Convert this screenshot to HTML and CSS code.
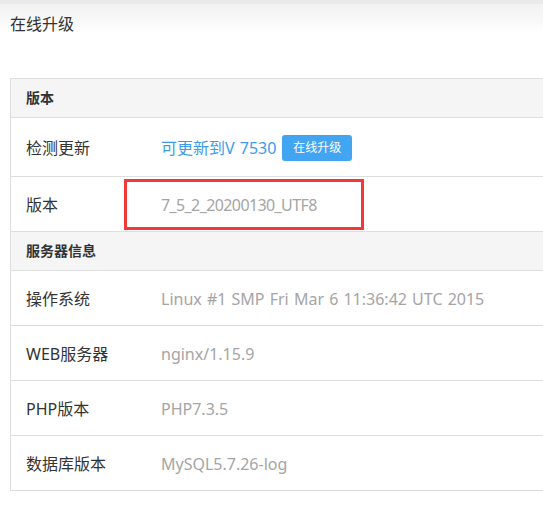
FILE: index.html
```html
<!DOCTYPE html>
<html lang="zh-CN">
<head>
<meta charset="utf-8">
<link rel="stylesheet" href="styles.css">
</head>
<body>
<div class="topbar"></div>
<div class="page-title">在线升级</div>
<div class="panel">
  <div class="row head"><div class="label">版本</div></div>
  <div class="row tall">
    <div class="label">检测更新</div>
    <div class="value"><span class="link">可更新到V 7530</span><span class="btn">在线升级</span></div>
  </div>
  <div class="row marked">
    <div class="label">版本</div>
    <div class="value version">7_5_2_20200130_UTF8</div>
    <div class="highlight"></div>
  </div>
  <div class="row head"><div class="label">服务器信息</div></div>
  <div class="row"><div class="label">操作系统</div><div class="value">Linux #1 SMP Fri Mar 6 11:36:42 UTC 2015</div></div>
  <div class="row"><div class="label">WEB服务器</div><div class="value">nginx/1.15.9</div></div>
  <div class="row"><div class="label">PHP版本</div><div class="value">PHP7.3.5</div></div>
  <div class="row"><div class="label">数据库版本</div><div class="value">MySQL5.7.26-log</div></div>
</div>
</body>
</html>
```
FILE: styles.css
```css
html, body {
  margin: 0;
  padding: 0;
}
body {
  width: 543px;
  height: 513px;
  overflow: hidden;
  background: linear-gradient(to bottom, #f0f0f0 0px, #f3f3f3 8px, #ffffff 34px, #ffffff 100%);
  font-family: "Noto Sans", "Noto Sans CJK SC", sans-serif;
  color: #333;
}
.topbar {
  height: 4px;
  background: #eaeaea;
}
.page-title {
  padding: 10px 10px 0 10px;
  height: 21px;
  line-height: 20px;
  font-size: 16px;
  color: #333;
}
.panel {
  margin: 43px 0 0 10px;
  width: 533px;
  border: 1px solid #dedede;
  border-right: none;
}
.row {
  position: relative;
  display: flex;
  align-items: center;
  height: 54px;
  border-bottom: 1px solid #dedede;
  font-size: 16px;
  line-height: 20px;
  padding-top: 1px;
  box-sizing: border-box;
  height: 55px;
}
.row:last-child {
  border-bottom: none;
  height: 54px;
}
.row.head {
  height: 39px;
  padding-top: 0;
  background: #f5f5f5;
  font-size: 14px;
  font-weight: bold;
}
.row.tall {
  height: 59px;
}
.label {
  width: 135px;
  padding-left: 15px;
  box-sizing: border-box;
  flex: none;
  color: #333;
}
.value {
  padding-left: 15px;
  color: #a5a5a5;
  display: flex;
  align-items: center;
  white-space: nowrap;
  word-spacing: 1px;
}
.value.version {
  letter-spacing: -0.6px;
}
.link {
  color: #3d9be9;
}
.btn {
  margin-left: 6px;
  width: 70px;
  height: 26px;
  line-height: 26px;
  text-align: center;
  background: #42a5f1;
  color: #fff;
  font-size: 12px;
  border-radius: 3px;
  letter-spacing: 0;
}
.highlight {
  position: absolute;
  left: 113px;
  top: 2px;
  width: 234px;
  height: 45px;
  border: 3px solid #f33838;
}
```
